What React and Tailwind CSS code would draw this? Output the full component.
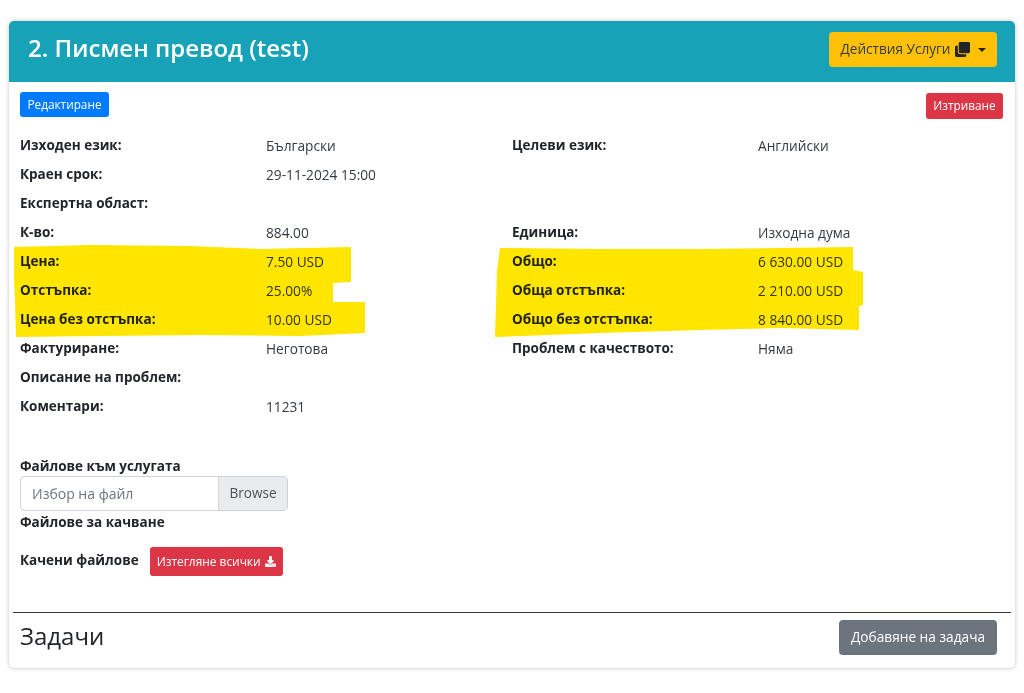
import { FaClone, FaDownload } from 'react-icons/fa'

const rows = [
  ['Изходен език:', 'Български', 'Целеви език:', 'Английски'],
  ['Краен срок:', '29-11-2024 15:00'],
  ['Експертна област:'],
  ['К-во:', '884.00', 'Единица:', 'Изходна дума'],
  ['Цена:', '7.50 USD', 'Общо:', '6 630.00 USD'],
  ['Отстъпка:', '25.00%', 'Обща отстъпка:', '2 210.00 USD'],
  ['Цена без отстъпка:', '10.00 USD', 'Общо без отстъпка:', '8 840.00 USD'],
  ['Фактуриране:', 'Неготова', 'Проблем с качеството:', 'Няма'],
  ['Описание на проблем:'],
  ['Коментари:', '11231'],
]

function Highlights() {
  return (
    <svg className="absolute left-0 top-0 pointer-events-none mix-blend-multiply" width="1024" height="693" fill="#ffe600">
      <path d="M14 247 L90 245 L190 246 L260 249 L351 247 L351 282 L333 283 L333 302 L365 302 L365 333 L300 336 L200 335 L100 336 L16 337 L15 300 L14 280 Z" />
      <path d="M500 248 L600 249 L700 249 L853 247 L853 270 L863 272 L863 305 L859 306 L859 330 L780 328 L700 330 L600 333 L495 337 L496 305 L497 270 Z" />
    </svg>
  )
}

export default function App() {
  return (
    <div className="relative w-[1024px] h-[693px] overflow-hidden bg-white pt-[21px] px-[9px] font-['Open_Sans','Noto_Sans',sans-serif] text-[13.5px] text-[#212529]">
      <div className="h-[647px] w-[1006px] rounded-[5px] bg-white shadow-[0_0_4px_rgba(0,0,0,0.25)] overflow-hidden">
        <div className="h-[61px] bg-[#17a2b8] flex items-center justify-between pb-[4px] pl-[19px] pr-[18px]">
          <h1 className="mb-[3px] text-[24px] font-semibold text-white leading-none">2. Писмен превод (test)</h1>
          <button className="h-[35px] w-[168px] rounded bg-[#ffc107] flex items-center justify-center gap-1 text-[13.6px] text-[#343a40]">
            Действия Услуги
            <FaClone className="text-[15px] text-[#212529]" />
            <span className="ml-1 border-x-[4px] border-t-[4px] border-x-transparent border-t-[#212529]" />
          </button>
        </div>

        <div className="px-[11px]">
          <div className="flex justify-between items-start pt-[10px] pr-[1px] h-[49px]">
            <button className="h-[25px] w-[89px] rounded-[3px] bg-[#007bff] text-white text-[11.8px]">Редактиране</button>
            <button className="mt-[1px] h-[26px] w-[77px] rounded-[3px] bg-[#dc3545] text-white text-[11.8px]">Изтриване</button>
          </div>

          <div className="grid grid-cols-[246px_246px_246px_246px]">
            {rows.map((row, i) => (
              <div key={i} className="contents">
                {[0, 1, 2, 3].map((c) => (
                  <div key={c} className={`h-[29px] leading-[29px] whitespace-nowrap ${c % 2 === 0 ? 'font-bold' : 'text-[13.7px] text-[#343a40]'}`}>
                    {row[c]}
                  </div>
                ))}
              </div>
            ))}
          </div>

          <div className="mt-[35px] font-bold leading-[20px]">Файлове към услугата</div>
          <div className="flex w-[268px] h-[35px] rounded border border-[#ced4da] overflow-hidden text-[14px]">
            <div className="flex-1 flex items-center pl-[11px] text-[#6c757d]">Избор на файл</div>
            <div className="w-[69px] flex items-center justify-center bg-[#e9ecef] border-l border-[#ced4da] text-[13.6px] text-[#495057]">Browse</div>
          </div>
          <div className="mt-[1px] font-bold leading-[21px]">Файлове за качване</div>

          <div className="mt-[14px] flex items-center gap-[11px]">
            <span className="mb-[3px] font-bold">Качени файлове</span>
            <button className="h-[29px] w-[133px] rounded-[3px] bg-[#dc3545] text-white text-[11.9px] flex items-center justify-center gap-1">
              Изтегляне всички
              <FaDownload className="text-[11px]" />
            </button>
          </div>
        </div>

        <div className="mt-[36px] mx-[4px] border-t border-[#343a40] flex items-center justify-between h-[43px] pl-[7px] pr-[14px]">
          <h2 className="mt-[4px] text-[24px] font-medium leading-none">Задачи</h2>
          <button className="mt-[6px] h-[35px] w-[158px] rounded bg-[#6c757d] text-white text-[13.7px]">Добавяне на задача</button>
        </div>
      </div>
      <Highlights />
    </div>
  )
}
